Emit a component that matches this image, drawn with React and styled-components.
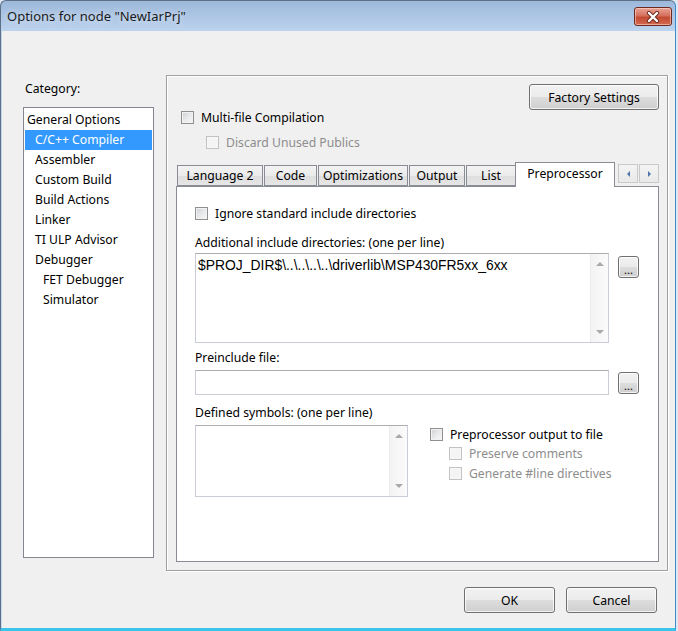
import React from 'react';
import styled, { createGlobalStyle } from 'styled-components';

const GlobalStyle = createGlobalStyle`
  html, body {
    margin: 0;
    padding: 0;
    background: #dfe8f2;
  }
  body {
    font-family: "Noto Sans", "Open Sans", sans-serif;
    font-size: 12.2px;
    color: #000;
  }
`;

const Window = styled.div`
  width: 674px;
  height: 627px;
  display: flex;
  flex-direction: column;
  border: 1px solid #5d6f85;
  border-right-color: #3b8dcc;
  border-bottom: 3px solid #3ac4ea;
  border-radius: 6px 6px 0 0;
  background: linear-gradient(#9cb8da, #bdd3ee 30px, #c4d8ef);
  overflow: hidden;
`;

const TitleBar = styled.div`
  height: 30px;
  display: flex;
  align-items: center;
  justify-content: space-between;
  padding-left: 6px;
  flex-shrink: 0;
`;

const Title = styled.span`
  font-size: 13px;
  color: #1b1b1b;
  text-shadow: 0 0 6px rgba(255, 255, 255, 0.7);
`;

const CloseButton = styled.div`
  width: 36px;
  height: 17px;
  align-self: flex-start;
  margin: 6px 3px 0 0;
  display: flex;
  align-items: center;
  justify-content: center;
  border: 1px solid #6e2a20;
  border-radius: 3px;
  background: linear-gradient(#e9a395, #d6705d 45%, #c24a33 55%, #d36a4f);
  box-shadow: inset 0 0 0 1px rgba(255, 220, 210, 0.55);
`;

const Client = styled.div`
  flex: 1;
  margin: 0 0 0 1px;
  padding: 44px 7px 0 21px;
  background: #f0f0f0;
  display: flex;
  flex-direction: column;
`;

const Body = styled.div`
  display: flex;
  gap: 12px;
  height: 496px;
`;

const CategoryColumn = styled.div`
  width: 131px;
  display: flex;
  flex-direction: column;
  padding-top: 6px;
`;

const CategoryLabel = styled.div`
  height: 16px;
  line-height: 16px;
  margin: 0 0 10px 2px;
`;

const ListBox = styled.div`
  height: 446px;
  border: 1px solid #828790;
  background: #fff;
  padding: 2px 1px 1px;
`;

const ListItem = styled.div`
  height: 20px;
  line-height: 20px;
  padding-left: ${(p) => 2 + p.level * 8}px;
  background: ${(p) => (p.selected ? '#3399ff' : 'transparent')};
  color: ${(p) => (p.selected ? '#fff' : '#000')};
  white-space: nowrap;
`;

const GroupBox = styled.div`
  flex: 1;
  display: flex;
  flex-direction: column;
  border: 1px solid #a0a0a0;
  box-shadow: 1px 1px 0 #fff, inset 1px 1px 0 #fff;
  padding: 8px 8px 8px 9px;
`;

const PushButton = styled.button`
  width: ${(p) => p.w}px;
  height: ${(p) => p.h || 26}px;
  padding: 0;
  font: inherit;
  color: #000;
  border: 1px solid #707070;
  border-radius: 3px;
  background: linear-gradient(#f2f2f2, #ebebeb 50%, #dddddd 51%, #cfcfcf);
  box-shadow: inset 0 0 0 1px rgba(255, 255, 255, 0.75);
`;

const FactoryButton = styled(PushButton)`
  align-self: flex-end;
`;

const CheckRow = styled.label`
  display: flex;
  align-items: center;
  gap: 7px;
  height: 14px;
  margin-left: ${(p) => p.indent || 0}px;
  margin-top: ${(p) => p.top || 0}px;
  color: ${(p) => (p.disabled ? '#8d8d8d' : '#000')};
  white-space: nowrap;
`;

const Box = styled.span`
  width: 11px;
  height: 11px;
  flex-shrink: 0;
  border: 1px solid ${(p) => (p.disabled ? '#c2c2c2' : '#8e8f8f')};
  background: ${(p) =>
    p.disabled
      ? '#f4f4f4'
      : 'linear-gradient(135deg, #cbcdd1 0%, #e6e7e9 45%, #f8f8f8 100%)'};
  box-shadow: inset 0 0 0 1px ${(p) => (p.disabled ? '#f7f7f7' : '#f2f2f2')};
`;

const Tabs = styled.div`
  flex: 1;
  display: flex;
  flex-direction: column;
  margin-top: 13px;
`;

const TabStrip = styled.div`
  height: 24px;
  display: flex;
  align-items: flex-end;
  padding-left: 1px;
  position: relative;
  z-index: 1;
`;

const Tab = styled.div`
  width: ${(p) => p.w}px;
  height: ${(p) => (p.active ? 25 : 21)}px;
  box-sizing: border-box;
  margin: 0 ${(p) => (p.active ? -2 : 1)}px ${(p) => (p.active ? -1 : 0)}px
    ${(p) => (p.active ? -2 : 0)}px;
  display: flex;
  align-items: center;
  justify-content: center;
  padding-bottom: ${(p) => (p.active ? 3 : 0)}px;
  border: 1px solid #898c95;
  border-bottom: ${(p) => (p.active ? 'none' : '1px solid #898c95')};
  background: ${(p) =>
    p.active ? '#fff' : 'linear-gradient(#f3f3f3, #ebebeb 50%, #dedede 51%, #e6e6e6)'};
  white-space: nowrap;
`;

const Spinner = styled.div`
  display: flex;
  gap: 1px;
  margin-left: auto;
  align-self: flex-start;
  margin-top: 2px;
`;

const SpinButton = styled.div`
  width: 18px;
  height: 17px;
  display: flex;
  align-items: center;
  justify-content: center;
  border: 1px solid #c9c9c9;
  background: linear-gradient(#f4f4f4, #e9e9e9);
`;

const Arrow = styled.span`
  width: 0;
  height: 0;
  border-top: 3px solid transparent;
  border-bottom: 3px solid transparent;
  border-${(p) => (p.dir === 'left' ? 'right' : 'left')}: 3px solid #4f74ad;
`;

const Panel = styled.div`
  flex: 1;
  background: #fff;
  border: 1px solid #898c95;
  padding: 19px 18px 0 18px;
  display: flex;
  flex-direction: column;
`;

const FieldLabel = styled.div`
  height: 16px;
  line-height: 16px;
  margin-top: ${(p) => p.top}px;
  margin-bottom: ${(p) => p.bottom}px;
  white-space: nowrap;
`;

const FieldRow = styled.div`
  display: flex;
  align-items: flex-start;
`;

const TextBox = styled.div`
  width: ${(p) => p.w}px;
  height: ${(p) => p.h}px;
  box-sizing: border-box;
  display: flex;
  border: 1px solid #c9ced6;
  border-top-color: #abadb3;
  background: #fff;
`;

const TextContent = styled.div`
  flex: 1;
  padding: 3px 2px;
  font-family: "Liberation Sans", Arial, sans-serif;
  font-size: 13.9px;
  white-space: nowrap;
  overflow: hidden;
`;

const ScrollStrip = styled.div`
  width: 17px;
  display: flex;
  flex-direction: column;
  justify-content: space-between;
  align-items: center;
  padding: 8px 0;
  border-left: 1px solid #ececec;
  background: linear-gradient(90deg, #f3f3f3, #fbfbfb);
`;

const ScrollArrow = styled.span`
  width: 0;
  height: 0;
  border-left: 4px solid transparent;
  border-right: 4px solid transparent;
  ${(p) => (p.up ? 'border-bottom' : 'border-top')}: 4px solid #a9a9a9;
`;

const BrowseButton = styled(PushButton)`
  margin: ${(p) => p.top}px 0 0 9px;
  display: flex;
  align-items: flex-end;
  justify-content: center;
  padding-bottom: 3px;
  font-size: 11px;
  line-height: 8px;
`;

const OutputOptions = styled.div`
  display: flex;
  flex-direction: column;
  margin: 2px 0 0 22px;
`;

const Footer = styled.div`
  display: flex;
  justify-content: flex-end;
  gap: 11px;
  margin: 16px 11px 0 0;
`;

const categories = [
  { name: 'General Options', level: 0 },
  { name: 'C/C++ Compiler', level: 1, selected: true },
  { name: 'Assembler', level: 1 },
  { name: 'Custom Build', level: 1 },
  { name: 'Build Actions', level: 1 },
  { name: 'Linker', level: 1 },
  { name: 'TI ULP Advisor', level: 1 },
  { name: 'Debugger', level: 1 },
  { name: 'FET Debugger', level: 2 },
  { name: 'Simulator', level: 2 },
];

const tabs = [
  { name: 'Language 2', w: 86 },
  { name: 'Code', w: 53 },
  { name: 'Optimizations', w: 90 },
  { name: 'Output', w: 56 },
  { name: 'List', w: 50 },
  { name: 'Preprocessor', w: 100, active: true },
];

function CheckBox({ label, disabled, indent, top }) {
  return (
    <CheckRow disabled={disabled} indent={indent} top={top}>
      <Box disabled={disabled} />
      {label}
    </CheckRow>
  );
}

function Scrolled({ w, h, children }) {
  return (
    <TextBox w={w} h={h}>
      <TextContent>{children}</TextContent>
      <ScrollStrip>
        <ScrollArrow up />
        <ScrollArrow />
      </ScrollStrip>
    </TextBox>
  );
}

export default function App() {
  return (
    <>
      <GlobalStyle />
      <Window>
        <TitleBar>
          <Title>Options for node "NewIarPrj"</Title>
          <CloseButton>
            <svg width="14" height="12" viewBox="0 0 14 12">
              <path d="M3 2 L11 10 M11 2 L3 10" stroke="#6b2a20" strokeWidth="4.2" strokeLinecap="round" />
              <path d="M3 2 L11 10 M11 2 L3 10" stroke="#fff" strokeWidth="2.4" strokeLinecap="round" />
            </svg>
          </CloseButton>
        </TitleBar>
        <Client>
          <Body>
            <CategoryColumn>
              <CategoryLabel>Category:</CategoryLabel>
              <ListBox>
                {categories.map((c) => (
                  <ListItem key={c.name} level={c.level} selected={c.selected}>
                    {c.name}
                  </ListItem>
                ))}
              </ListBox>
            </CategoryColumn>
            <GroupBox>
              <FactoryButton w={130}>Factory Settings</FactoryButton>
              <CheckBox label="Multi-file Compilation" indent={5} top={0} />
              <CheckBox label="Discard Unused Publics" indent={30} top={11} disabled />
              <Tabs>
                <TabStrip>
                  {tabs.map((t) => (
                    <Tab key={t.name} w={t.w} active={t.active}>
                      {t.name}
                    </Tab>
                  ))}
                  <Spinner>
                    <SpinButton>
                      <Arrow dir="left" />
                    </SpinButton>
                    <SpinButton>
                      <Arrow dir="right" />
                    </SpinButton>
                  </Spinner>
                </TabStrip>
                <Panel>
                  <CheckBox label="Ignore standard include directories" />
                  <FieldLabel top={15} bottom={2}>
                    Additional include directories: (one per line)
                  </FieldLabel>
                  <FieldRow>
                    <Scrolled w={414} h={90}>
                      $PROJ_DIR$\..\..\..\..\driverlib\MSP430FR5xx_6xx
                    </Scrolled>
                    <BrowseButton w={21} h={22} top={3}>...</BrowseButton>
                  </FieldRow>
                  <FieldLabel top={7} bottom={4}>Preinclude file:</FieldLabel>
                  <FieldRow>
                    <TextBox w={414} h={25} />
                    <BrowseButton w={21} h={22} top={2}>...</BrowseButton>
                  </FieldRow>
                  <FieldLabel top={10} bottom={4}>Defined symbols: (one per line)</FieldLabel>
                  <FieldRow>
                    <Scrolled w={213} h={72} />
                    <OutputOptions>
                      <CheckBox label="Preprocessor output to file" />
                      <CheckBox label="Preserve comments" indent={19} top={5} disabled />
                      <CheckBox label="Generate #line directives" indent={19} top={6} disabled />
                    </OutputOptions>
                  </FieldRow>
                </Panel>
              </Tabs>
            </GroupBox>
          </Body>
          <Footer>
            <PushButton w={91}>OK</PushButton>
            <PushButton w={91}>Cancel</PushButton>
          </Footer>
        </Client>
      </Window>
    </>
  );
}
